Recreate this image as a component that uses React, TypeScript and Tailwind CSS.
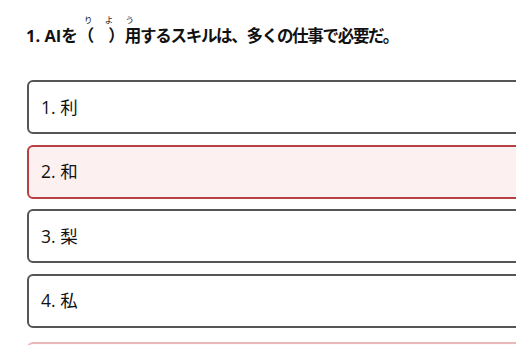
import React from "react";

const options = ["1. 利", "2. 和", "3. 梨", "4. 私"];

export default function App() {
  return (
    <div
      className="w-[516px] h-[345px] overflow-hidden bg-white text-[#111]"
      style={{ fontFamily: '"Open Sans", "Noto Sans CJK JP", sans-serif' }}
    >
      <div className="w-[660px] pl-[27px] pt-[17px]">
        <h2 className="text-[16.5px] font-bold leading-[28px] ml-[-1px]">
          1. AIを
          <ruby className="[ruby-align:space-around]">
            （<span className="inline-block w-[14px]"></span>）
            <span className="tracking-[-1.2px]">用</span>
            <rt className="relative top-[-2px] text-[8.5px] font-normal leading-[10px]">りよう</rt>
          </ruby>
          <span className="tracking-[-1.3px]">するスキルは、多くの仕事で必要だ。</span>
        </h2>
        <div className="mt-[30px] flex flex-col gap-[10.5px]">
          {options.map((o, i) => (
            <div
              key={o}
              className={
                i === 1
                  ? "h-[54px] rounded-[6px] border-2 border-[#b94042] bg-[#fdf0f0] flex items-center pl-[12px] text-[17.5px]"
                  : "h-[54px] rounded-[6px] border-2 border-[#555555] bg-white flex items-center pl-[12px] text-[17.5px]"
              }
            >
              {o}
            </div>
          ))}
          <div className="h-[54px] rounded-[6px] border-2 border-[#e9b8b8] bg-[#fffafa] mt-[4px]"></div>
        </div>
      </div>
    </div>
  );
}
